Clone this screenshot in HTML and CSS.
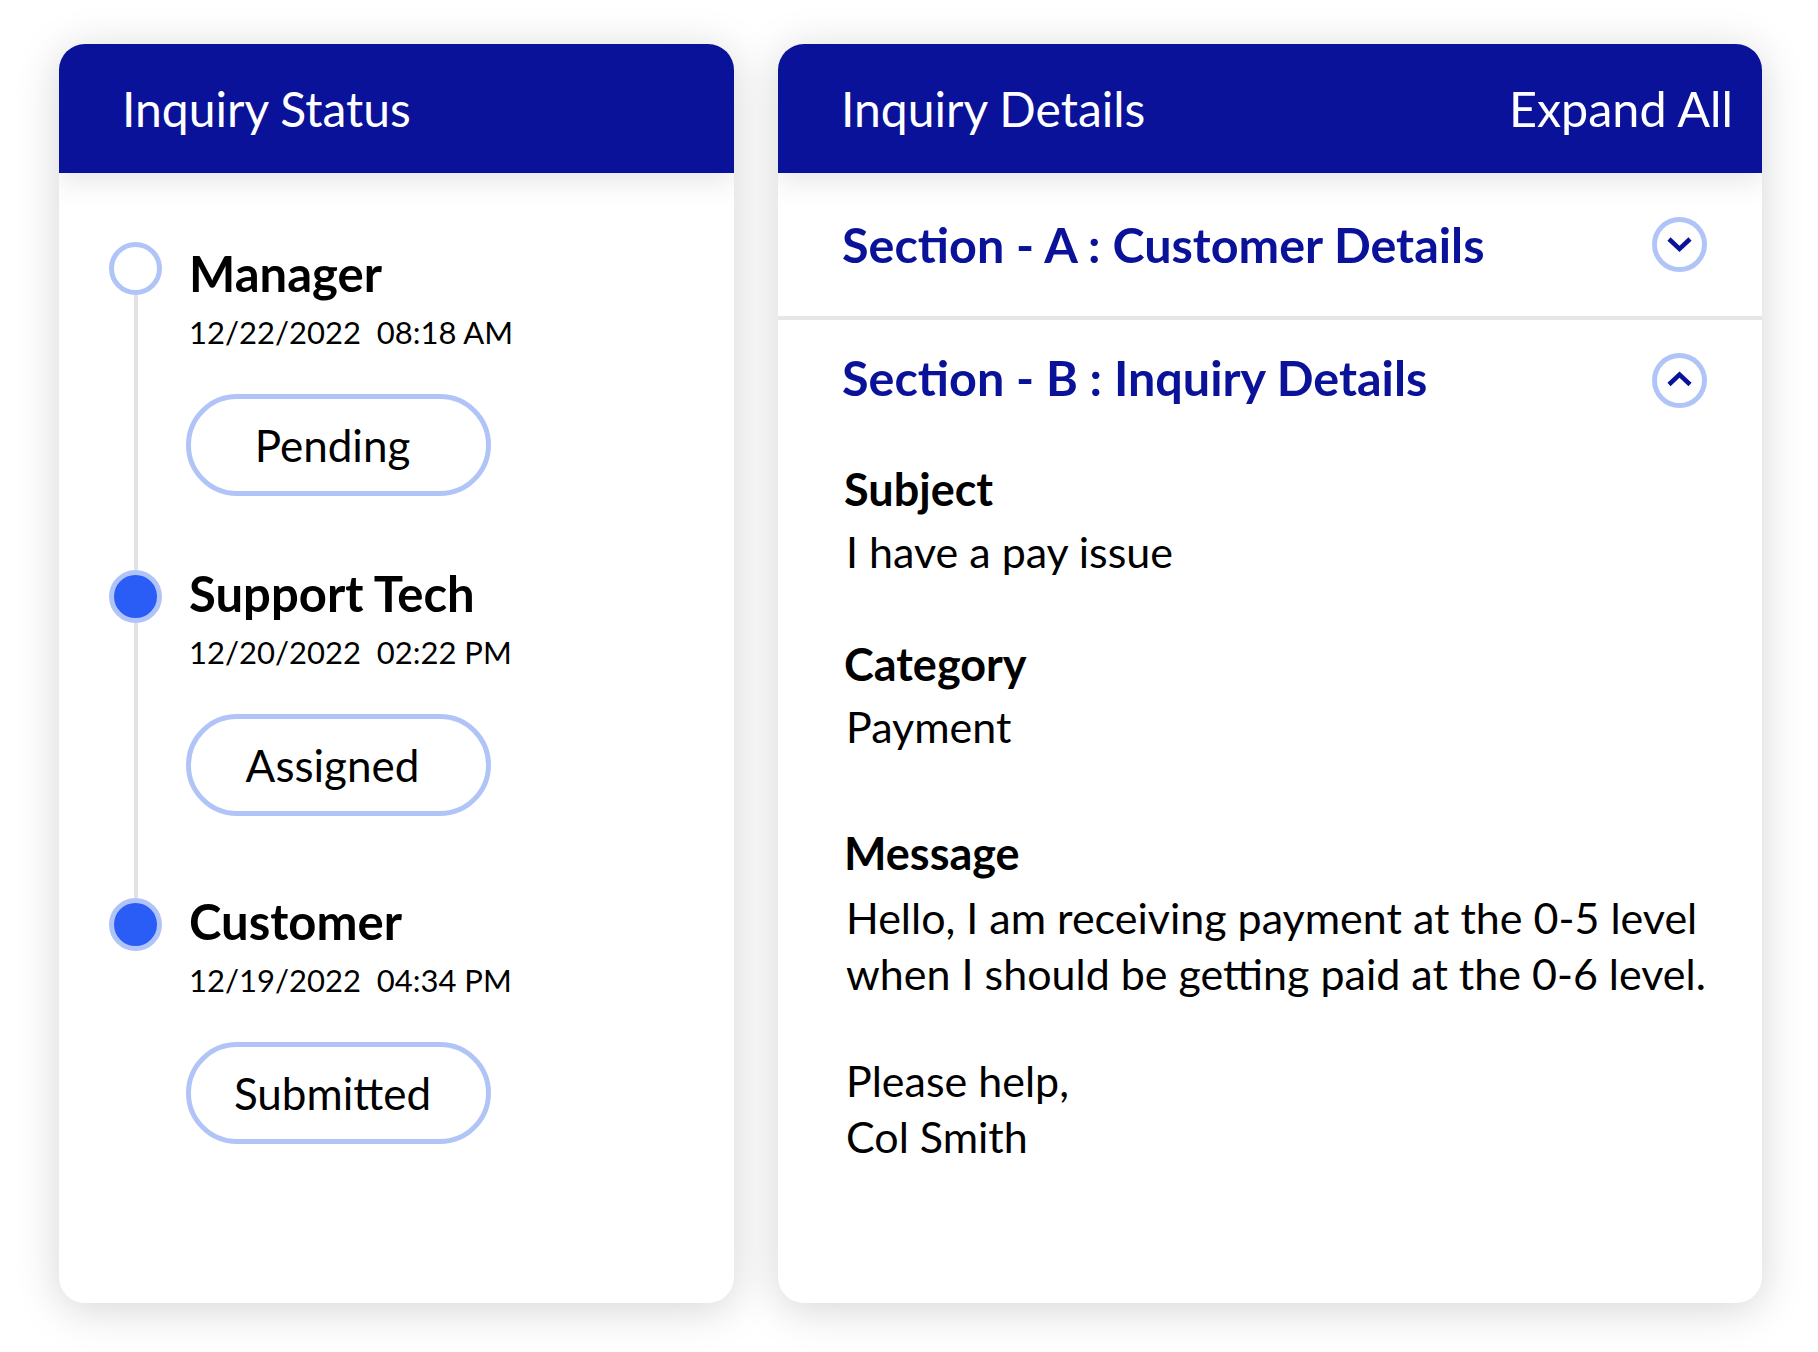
FILE: index.html
```html
<!DOCTYPE html>
<html lang="en">
<head>
<meta charset="utf-8">
<title>Inquiry</title>
<link rel="stylesheet" href="styles.css">
</head>
<body>
<div class="page">
  <section class="card card-status">
    <header class="card-head">
      <h1 class="card-title">Inquiry Status</h1>
    </header>
    <ol class="timeline">
      <li class="step step-first">
        <div class="marker"><span class="dot dot-open"></span><span class="line"></span></div>
        <div class="info">
          <div class="who">Manager</div>
          <div class="when">12/22/2022&nbsp;&nbsp;08:18 AM</div>
          <div class="pill">Pending</div>
        </div>
      </li>
      <li class="step">
        <div class="marker"><span class="dot"></span><span class="line"></span></div>
        <div class="info">
          <div class="who">Support Tech</div>
          <div class="when">12/20/2022&nbsp;&nbsp;02:22 PM</div>
          <div class="pill">Assigned</div>
        </div>
      </li>
      <li class="step step-last">
        <div class="marker"><span class="dot"></span></div>
        <div class="info">
          <div class="who">Customer</div>
          <div class="when">12/19/2022&nbsp;&nbsp;04:34 PM</div>
          <div class="pill">Submitted</div>
        </div>
      </li>
    </ol>
  </section>

  <section class="card card-details">
    <header class="card-head">
      <h1 class="card-title">Inquiry Details</h1>
      <span class="expand">Expand All</span>
    </header>
    <div class="acc acc-closed">
      <div class="acc-head">
        <h2 class="acc-title">Section - A : Customer Details</h2>
        <svg class="chev" viewBox="0 0 55 55" width="55" height="55" aria-hidden="true">
          <circle cx="27.5" cy="27.5" r="25" fill="none" stroke="#b0c4f8" stroke-width="5"/>
          <polyline points="17,22 27.5,32 38,22" fill="none" stroke="#0a1299" stroke-width="4.5"/>
        </svg>
      </div>
    </div>
    <div class="acc acc-open">
      <div class="acc-head acc-head-open">
        <h2 class="acc-title">Section - B : Inquiry Details</h2>
        <svg class="chev" viewBox="0 0 55 55" width="55" height="55" aria-hidden="true">
          <circle cx="27.5" cy="27.5" r="25" fill="none" stroke="#b0c4f8" stroke-width="5"/>
          <polyline points="17,31.5 27.5,21.5 38,31.5" fill="none" stroke="#0a1299" stroke-width="4.5"/>
        </svg>
      </div>
      <div class="fields">
        <div class="field field-subject">
          <div class="label">Subject</div>
          <div class="value">I have a pay issue</div>
        </div>
        <div class="field field-category">
          <div class="label">Category</div>
          <div class="value">Payment</div>
        </div>
        <div class="field">
          <div class="label">Message</div>
          <div class="value msg">
            <p class="msg-par">Hello, I am receiving payment at the 0-5 level<br>when I should be getting paid at the 0-6 level.</p>
            <p class="msg-par">Please help,<br>Col Smith</p>
          </div>
        </div>
      </div>
    </div>
  </section>
</div>
</body>
</html>
```

FILE: styles.css
```css
html, body {
  margin: 0;
  padding: 0;
  background: #ffffff;
}

body {
  font-family: Lato, "Open Sans", sans-serif;
  color: #000;
}

.page {
  display: flex;
  align-items: flex-start;
  gap: 44px;
  padding: 44px 56px 49px 59px;
}

.card {
  background: #fff;
  border-radius: 26px;
  box-shadow: 0 6px 44px rgba(0, 0, 0, 0.17);
  overflow: hidden;
  height: 1259px;
  box-sizing: border-box;
}

.card-status { width: 675px; }
.card-details { width: 984px; }

.card-head {
  position: relative;
  z-index: 1;
  height: 129px;
  box-sizing: border-box;
  background: #0a1299;
  color: #fff;
  display: flex;
  align-items: center;
  justify-content: space-between;
  padding: 0 29px 0 63px;
  box-shadow: 0 10px 26px rgba(0, 0, 0, 0.09);
}

.card-title {
  margin: 0;
  font-size: 48px;
  font-weight: 400;
  line-height: 1;
}

.expand {
  font-size: 48.5px;
  line-height: 1;
}

/* timeline */
.timeline {
  list-style: none;
  margin: 0;
  padding: 69px 0 0 50px;
}

.step {
  display: grid;
  grid-template-columns: 53px 1fr;
  column-gap: 27px;
}

.marker {
  display: flex;
  flex-direction: column;
  align-items: center;
}

.dot {
  width: 53px;
  height: 53px;
  box-sizing: border-box;
  border-radius: 50%;
  border: 5px solid #b0c4f8;
  background: #2a5cf6;
  flex: none;
}

.dot-open { background: #fff; }

.line {
  flex: 1;
  width: 4px;
  background: #e2e2e2;
}

.step-first .info { padding-top: 8px; }

.who {
  font-size: 49px;
  font-weight: 700;
  line-height: 46px;
}

.when {
  font-size: 31px;
  line-height: 40px;
  margin-top: 16px;
}

.pill {
  margin: 42px 0 82px -3px;
  width: 305px;
  height: 102px;
  box-sizing: border-box;
  border: 5px solid #b0c4f8;
  border-radius: 51px;
  display: flex;
  align-items: center;
  justify-content: center;
  padding-right: 12px;
  font-size: 44px;
}

.step-first .pill { margin-bottom: 74px; }

/* accordion */
.acc-closed {
  border-bottom: 4px solid #e6e6e6;
}

.acc-head {
  height: 143px;
  box-sizing: border-box;
  display: flex;
  align-items: center;
  justify-content: space-between;
  padding: 0 55px 0 64px;
}

.acc-head-open {
  height: 121px;
}

.acc-title {
  margin: 0;
  font-size: 48.5px;
  font-weight: 700;
  line-height: 1;
  color: #0a1299;
}

.acc-head-open .acc-title { margin-bottom: 7px; }

.chev { display: block; flex: none; }

.fields {
  padding: 23px 20px 0 66px;
}

.field-subject { margin-bottom: 60px; }
.field-category { margin-bottom: 74px; }

.label {
  font-size: 45px;
  font-weight: 700;
  line-height: 50px;
}

.value {
  margin-top: 10px;
  font-size: 43px;
  line-height: 55px;
  padding-left: 2px;
}

.msg {
  white-space: nowrap;
  margin-top: 12px;
  line-height: 55.5px;
}

.msg-par {
  margin: 0;
}

.msg-par + .msg-par {
  margin-top: 52px;
}
```
